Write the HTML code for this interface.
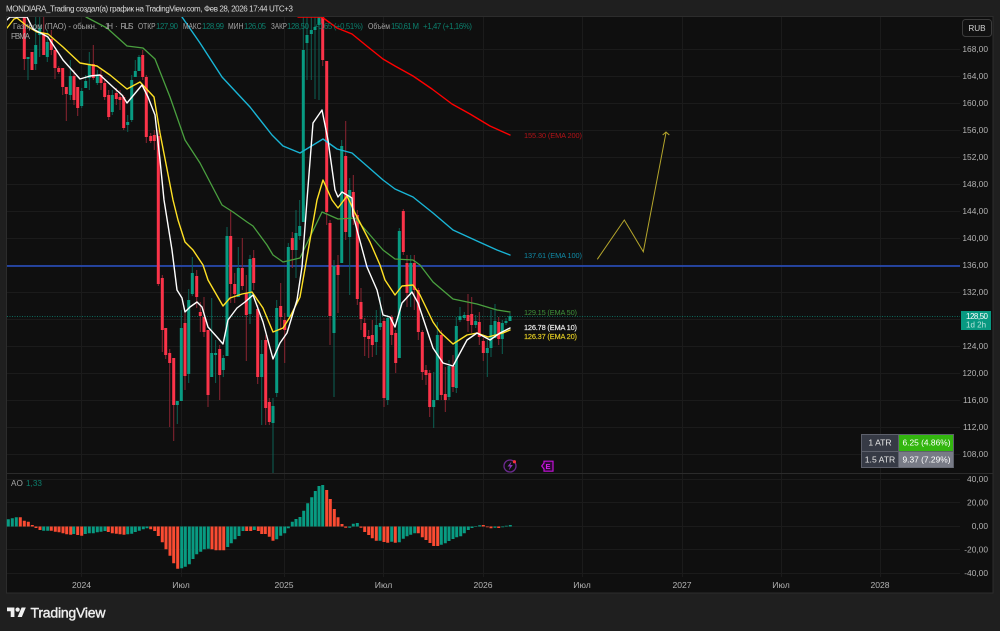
<!DOCTYPE html>
<html lang="ru"><head><meta charset="utf-8"><title>MONDIARA_Trading</title>
<style>
html,body{margin:0;padding:0;background:#1f1f1f;width:1000px;height:631px;overflow:hidden}
svg{display:block;filter:blur(.38px)}
text{font-family:"Liberation Sans","Noto Sans CJK SC",sans-serif;font-size:8px}
.p{fill:#b4b4b4;text-anchor:end;font-size:8.4px}
.t{fill:#b4b4b4;text-anchor:middle;font-size:8.6px}
.l{fill:#a6a6a6;font-size:7.8px}
.v{fill:#0c7f6d;font-size:7.8px}
.m{font-size:7.4px}
</style></head><body>
<svg width="1000" height="631" viewBox="0 0 1000 631" xmlns="http://www.w3.org/2000/svg">
<defs><clipPath id="c"><rect x="7" y="17" width="953" height="456"/></clipPath></defs>
<rect width="1000" height="631" fill="#1f1f1f"/>
<rect x="6.5" y="16.5" width="986.5" height="576.5" fill="#0f0f0f" stroke="#2c2c2c"/>
<path d="M7 49.5H960M7 76.5H960M7 103.5H960M7 130.5H960M7 157.5H960M7 184.5H960M7 211.5H960M7 238.5H960M7 265.5H960M7 292.5H960M7 319.5H960M7 346.5H960M7 373.5H960M7 400.5H960M7 427.5H960M7 454.5H960M7 479.5H960M7 502.5H960M7 526.5H960M7 549.5H960M7 573.5H960M81.5 17V577M181.5 17V577M284.5 17V577M383.5 17V577M483.5 17V577M582.5 17V577M682.5 17V577M781.5 17V577M880.5 17V577" stroke="#1b1b1b" fill="none"/>
<path d="M7 473.5H993" stroke="#2b2b2b"/>

<g clip-path="url(#c)">
<path d="M7 316.5H960" stroke="#0d6b5c" stroke-dasharray="1 1.5"/>
<path d="M7 266H960" stroke="#2a52c9" stroke-width="1.6"/>
<!-- wicks -->
<path fill="none" stroke="#0b6154" d="M28 57V80M35.7 17V70M39.7 17V57M47.3 30V62M70.3 60V100M81.7 88V108M85.7 75V88M89.3 52V90M97.3 70V85M112.3 90V115M127.7 115V132M131.7 75V122M135.3 60V77M139 55V71M177.3 401V424M181.3 310V401M188.7 289V383M192.3 257V296M211.7 298V377M215.6 340V383M223.3 355V377M227 227V356M238.3 247V297M250 255V324M261.7 340V425M273 398V473M276.7 300V397M288.3 243V317M296 210V278M299.7 200V240M303.3 17V222M307 17V80M311.3 17V80M315 17V99M319 17V100M334 260V397M341.7 140V263M349.7 178V295M376.3 310V355M380.3 297V330M387.7 315V405M399.3 228V358M410.7 255V307M433.7 372V428M437.3 322V400M449 360V400M456.3 317V393M460 307V322M464.3 312V320M475.7 315V328M487.3 340V377M491 310V357M495 304V338M502.3 320V354M506 318V325M510 313V321"/>
<path fill="none" stroke="#8a2431" d="M24.3 17V70M32 52V70M43.7 17V55M51.3 30V55M55 50V79M58.7 66V74M62.7 68V95M66.3 87V121M74 70V105M77.7 87V116M93.3 45V80M101 70V90M104.7 80V100M108.7 90V120M116.3 88V105M120 90V110M123.7 95V130M142.7 50V80M146.3 75V143M150.7 133V143M154.3 130V150M158.3 130V286M162.3 275V352M165.7 328V359M169.7 349V427M173.7 358V441M185 313V390M196.7 270V308M200.3 302V332M204 297V337M208 330V407M219.7 345V400M230.7 210V303M234.7 273V303M242.3 238V290M246.3 275V361M253.7 250V290M257.7 305V384M265.7 335V425M269.3 398V425M280.7 283V330M284.7 313V363M292.3 232V268M322.7 17V66M326.7 61V225M330 220V345M338 255V313M345.7 121V240M353.3 175V225M357.3 210V305M361 288V330M364.7 318V356M368.7 330V358M372.3 320V357M384 318V407M391.7 315V345M395.7 330V373M403.3 209V255M407 255V307M414.3 255V310M418.3 288V340M422.3 330V380M426 365V385M429.7 370V417M441.3 330V400M445.3 367V412M453 355V392M468 294V332M471.7 297V333M479.3 312V345M483.3 338V361M498.7 317V345"/>
<!-- bodies -->
<path fill="none" stroke="#089b82" stroke-width="3" d="M28 57V59M35.7 45V64M39.7 28V35M47.3 42V57M70.3 76V95M81.7 91V106M85.7 81V88M89.3 64V78M97.3 75V83M112.3 95V112M127.7 122V125M131.7 80V120M135.3 71V77M139 57V71M177.3 401V405M181.3 328V401M188.7 300V374M192.3 273V294M211.7 353V377M215.6 353V355M223.3 358V370M227 236V356M238.3 268V297M250 259V314M261.7 354V377M273 406V423M276.7 308V393M288.3 247V317M296 233V250M299.7 226V236M303.3 50V222M307 35V43M311.3 30V34M315 27V30M319 17V25M334 266V333M341.7 146V263M349.7 190V237M376.3 325V342M380.3 323V327M387.7 318V400M399.3 231V358M410.7 263V293M433.7 400V407M437.3 335V400M449 366V397M456.3 326V388M460 316V320M464.3 315V318M475.7 321V325M487.3 348V353M491 325V348M495 321V338M502.3 323V339M506 321V323M510 316V321"/>
<path fill="none" stroke="#fb3349" stroke-width="3" d="M24.3 17V59M32 52V70M43.7 33V55M51.3 39V50M55 50V68M58.7 68V72M62.7 68V87M66.3 87V94M74 76V100M77.7 87V108M93.3 64V78M101 75V83M104.7 83V97M108.7 95V117M116.3 93V99M120 97V100M123.7 97V128M142.7 55V77M146.3 77V137M150.7 136V141M154.3 135V141M158.3 136V284M162.3 278V330M165.7 328V355M169.7 353V363M173.7 358V405M185 323V376M196.7 276V297M200.3 312V316M204 317V332M208 330V395M219.7 349V375M230.7 236V284M234.7 284V294M242.3 268V286M246.3 293V315M253.7 258V283M257.7 309V377M265.7 340V408M269.3 402V422M280.7 306V317M284.7 320V330M292.3 238V250M322.7 17V60M326.7 61V212M330 223V316M338 265V275M345.7 156V232M353.3 192V217M357.3 215V299M361 302V319M364.7 323V337M368.7 336V339M372.3 335V345M384 321V398M391.7 317V335M395.7 333V363M403.3 211V252M407 263V293M414.3 263V290M418.3 290V332M422.3 332V372M426 370V375M429.7 373V407M441.3 335V395M445.3 394V400M453 366V387M468 315V321M471.7 314V325M479.3 322V337M483.3 341V353M498.7 322V339"/>
<!-- EMA lines -->
<g fill="none" stroke-linejoin="round" stroke-linecap="round">
<path stroke="#4aa03f" stroke-width="1.3" d="M86 17L107 28L127 46L143 48L155 59L170 97L185 140L200 163L222 205L233 212L247 222L253 226L267 245L273 255L283 262L300 258L310 237L322 212L338 219L355 218L370 235L383 250L395 259L413 260L420 265L433 282L453 299L477 304L497 310L510 312"/>
<path stroke="#19b5d6" stroke-width="1.4" d="M182 17L200 43L222 77L250 107L272 135L283 146L300 153L323 139L337 149L352 153L367 166L383 180L395 189L413 197L433 213L453 230L477 241L497 250L510 255"/>
<path stroke="#f00" stroke-width="1.4" d="M298 17H322L337 28L352 34L368 47L383 59L395 66L413 76L432 89L452 104L470 114L490 126L510 135"/>
<path stroke="#ffe125" stroke-width="1.4" d="M7 28L14 19L17 18L27 26L37 32L48 34L63 47L80 63L97 66L110 75L127 89L140 82L154 97L160 133L173 200L178 220L185 242L193 250L203 265L208 280L223 306L230 298L242 294L252 292L263 308L273 332L283 328L290 317L300 297L310 240L317 200L323 180L332 200L338 208L347 196L355 213L370 242L380 265L385 280L395 295L402 286L413 285L420 295L433 322L440 332L453 344L467 335L477 333L488 337L503 333L510 330"/>
<path stroke="#fff" stroke-width="1.4" d="M7 20L10 17H27L33 29L48 37L63 60L80 79L90 76L100 75L113 87L122 95L127 103L142 85L148 97L155 115L160 160L164 200L172 250L177 290L182 298L185 312L190 307L197 302L202 307L208 327L217 337L223 344L228 320L237 308L245 302L253 295L263 322L273 359L280 343L287 333L297 300L302 267L307 200L313 123L322 110L328 140L335 190L338 197L342 192L352 198L353 215L367 267L377 290L383 315L390 317L395 327L402 303L412 292L418 303L433 348L443 363L453 366L467 340L477 333L490 340L500 333L510 328"/>
</g>
<!-- projection arrow -->
<path fill="none" stroke="#b5a62c" d="M597.3 259.3L624.3 220L643.3 251.7L666 132.7M662.7 135L666 132L669.3 135"/>
<!-- icons -->
<circle cx="510" cy="466" r="6" fill="none" stroke="#6b2a8f" stroke-width="1.3"/>
<path d="M511.5 461.5L507.5 466.5H510L508.7 470.5L512.8 465H510.3Z" fill="#8a36b8"/>
<circle cx="514.4" cy="461.7" r="1.6" fill="#f5303f"/>
<path d="M541.7 466L544 463V461.2H553V471.2H544V469Z" fill="#2c0a33" stroke="#c211d6" stroke-width="1.2"/>
<text x="545.5" y="469" fill="#d31fe6" style="font-size:7.5px;font-weight:700">E</text>
</g>

<!-- AO -->
<path fill="none" stroke="#089b82" stroke-width="3" d="M8.3 526.5V519.3M12.3 526.5V518.3M16.3 526.5V517.3M43.7 526.5V530.7M47.7 526.5V530.7M73.7 526.5V534M85.3 526.5V534M89.3 526.5V533.3M93.3 526.5V533.3M97.3 526.5V532.3M101 526.5V531.7M105 526.5V531M127.7 526.5V534.3M131.7 526.5V533.7M135.3 526.5V532M139.3 526.5V530.7M143.3 526.5V529.3M147 526.5V528.3M181.7 526.5V568.3M185.3 526.5V566.7M189.3 526.5V564.3M193 526.5V559M196.7 526.5V554.3M200.7 526.5V551.7M204.3 526.5V549.3M208.3 526.5V548.7M227.7 526.5V547M231.3 526.5V543.3M235 526.5V539.3M239 526.5V536M243 526.5V531M254.3 526.5V530M276.7 526.5V539.3M280.7 526.5V535.7M284.7 526.5V533.3M288.3 526.5V528.3M292.3 526.5V521.7M296 526.5V519M300 526.5V517M303.7 526.5V510.7M307.7 526.5V503.3M311.7 526.5V497.3M315.3 526.5V491M319 526.5V486M322.7 526.5V485M349.7 526.5V527.7M353.3 526.5V523.7M357.3 526.5V523M380 526.5V540.7M391.7 526.5V541.7M399.3 526.5V542.3M403.3 526.5V538.7M407 526.5V536.3M410.7 526.5V534.7M414.7 526.5V533.3M441.3 526.5V544.7M445.3 526.5V543.3M449 526.5V541M453 526.5V539M456.7 526.5V537.3M460.7 526.5V536.3M464.3 526.5V533.3M468.3 526.5V530M472 526.5V528M475.7 526.5V526M479.7 526.5V525.3M495 526.5V527.7M502.7 526.5V527.3M506.3 526.5V525.7M510.3 526.5V525"/>
<path fill="none" stroke="#fb4b32" stroke-width="3" d="M20.3 526.5V517.3M24.3 526.5V520.7M28.3 526.5V521.7M32.3 526.5V525M36 526.5V528M40 526.5V530M51.3 526.5V530.7M55.3 526.5V531.7M59 526.5V532.3M63 526.5V533.3M66.7 526.5V534.3M70.7 526.5V534.7M77.7 526.5V535M81.7 526.5V535.7M108.3 526.5V532M112.3 526.5V533.3M116.3 526.5V533.7M120 526.5V534.3M124 526.5V534.7M150.7 526.5V529.3M154.7 526.5V531M158.3 526.5V536M162.3 526.5V542.3M166 526.5V549.3M170 526.5V555.7M173.7 526.5V563.3M177.7 526.5V568.7M212 526.5V549.3M216 526.5V550.3M220 526.5V550.3M223.7 526.5V550.3M246.7 526.5V531M250.7 526.5V531M258.3 526.5V531M261.7 526.5V534M265.3 526.5V534M269.3 526.5V536.7M273 526.5V540.7M326.7 526.5V490M330.3 526.5V499M334.3 526.5V509M338 526.5V517.3M342 526.5V524M345.7 526.5V527.7M361 526.5V527.7M364.7 526.5V532M368.7 526.5V535M372.3 526.5V538.3M376.3 526.5V540.7M384 526.5V542M387.7 526.5V542.7M395.3 526.5V542.7M418.3 526.5V533.3M422.3 526.5V537.3M426 526.5V540M430 526.5V543M433.7 526.5V546M437.7 526.5V546M483.3 526.5V525M487.3 526.5V527.3M491 526.5V528.3M498.7 526.5V528"/>

<!-- header -->
<text x="6" y="11.5" fill="#dcdcdc" textLength="287" lengthAdjust="spacing" style="font-size:8px">MONDIARA_Trading создал(а) график на TradingView.com, Фев 28, 2026 17:44 UTC+3</text>

<!-- legend -->
<text class="l" x="13" y="29" textLength="84">Газпром (ПАО) - обыкн.</text>
<text class="l" x="100" y="29">·</text><text class="l" x="105" y="29" textLength="8">1Н</text><text class="l" x="115" y="29">·</text><text class="l" x="120.5" y="29" textLength="13">RUS</text>
<text class="l" x="138" y="29" textLength="17.5" lengthAdjust="spacingAndGlyphs">ОТКР</text><text class="v" x="156" y="29" textLength="22">127,90</text>
<text class="l" x="183" y="29" textLength="18.5" lengthAdjust="spacingAndGlyphs">МАКС</text><text class="v" x="202" y="29" textLength="22">128,99</text>
<text class="l" x="228" y="29" textLength="15.5" lengthAdjust="spacingAndGlyphs">МИН</text><text class="v" x="244" y="29" textLength="22">126,05</text>
<text class="l" x="271" y="29" textLength="16" lengthAdjust="spacingAndGlyphs">ЗАКР</text><text class="v" x="287" y="29" textLength="22">128,50</text>
<text class="v" x="314" y="29" textLength="49">+0,65 (+0,51%)</text>
<text class="l" x="368" y="29" textLength="22" lengthAdjust="spacingAndGlyphs">Объём</text><text class="v" x="391" y="29" textLength="28">150,61 M</text>
<text class="v" x="423" y="29" textLength="49">+1,47 (+1,16%)</text>
<text class="l" x="11" y="39" textLength="19">FBMA</text>

<!-- EMA labels -->
<text class="m" x="524" y="138" fill="#b31217" textLength="58" lengthAdjust="spacing">155.30 (EMA 200)</text>
<text class="m" x="524" y="258" fill="#108aa6" textLength="58" lengthAdjust="spacing">137.61 (EMA 100)</text>
<text class="m" x="524" y="315" fill="#3f8f38" textLength="53" lengthAdjust="spacing">129.15 (EMA 50)</text>
<text class="m" x="524" y="330" fill="#f0f0f0" textLength="53" lengthAdjust="spacing" stroke="#f0f0f0" stroke-width=".15">126.78 (EMA 10)</text>
<text class="m" x="524" y="339" fill="#e6cf24" textLength="53" lengthAdjust="spacing" stroke="#e6cf24" stroke-width=".15">126.37 (EMA 20)</text>

<!-- price scale -->
<rect x="962.5" y="19.5" width="29" height="17" rx="3" fill="#111" stroke="#3c3c3c"/>
<text x="977" y="31" fill="#d0d0d0" text-anchor="middle" style="font-size:8.2px">RUB</text>
<text class="p" x="988" y="52">168,00</text><text class="p" x="988" y="79">164,00</text><text class="p" x="988" y="106">160,00</text><text class="p" x="988" y="133">156,00</text><text class="p" x="988" y="160">152,00</text><text class="p" x="988" y="187">148,00</text><text class="p" x="988" y="214">144,00</text><text class="p" x="988" y="241">140,00</text><text class="p" x="988" y="268">136,00</text><text class="p" x="988" y="295">132,00</text>
<text class="p" x="988" y="349">124,00</text><text class="p" x="988" y="376">120,00</text><text class="p" x="988" y="403">116,00</text><text class="p" x="988" y="430">112,00</text><text class="p" x="988" y="457">108,00</text>
<text class="p" x="988" y="482">40,00</text><text class="p" x="988" y="505.5">20,00</text><text class="p" x="988" y="529">0,00</text><text class="p" x="988" y="552.5">-20,00</text><text class="p" x="988" y="576">-40,00</text>
<rect x="961" y="311" width="30" height="19" fill="#089981"/>
<text x="966" y="319" fill="#fff" textLength="22" style="font-size:8px">128,50</text>
<text x="966" y="327.5" fill="#b8e4db" style="font-size:8px">1d 2h</text>

<!-- ATR table -->
<rect x="861.5" y="434.5" width="92" height="33" fill="#363a45" stroke="#5d606b"/>
<rect x="899" y="435" width="54" height="16" fill="#33b60f"/>
<rect x="899" y="451.5" width="54" height="16" fill="#787b86"/>
<path d="M861.5 451.5H953.5M898.5 434.5V467.5" stroke="#5d606b"/>
<text x="880" y="445.5" fill="#e8e8e8" text-anchor="middle" style="font-size:8.6px">1 ATR</text>
<text x="880" y="462.5" fill="#e8e8e8" text-anchor="middle" style="font-size:8.6px">1.5 ATR</text>
<text x="902.5" y="445.5" fill="#fff" textLength="48" style="font-size:8.4px">6.25 (4.86%)</text>
<text x="902.5" y="462.5" fill="#fff" textLength="48" style="font-size:8.4px">9.37 (7.29%)</text>

<!-- AO legend -->
<text class="l" x="11" y="486" style="font-size:8.2px">AO</text><text x="26" y="486" fill="#0c7f6d" style="font-size:8.2px">1,33</text>

<!-- time axis -->
<text class="t" x="81.5" y="588">2024</text><text class="t" x="181" y="588">Июл</text><text class="t" x="284" y="588">2025</text><text class="t" x="383.5" y="588">Июл</text><text class="t" x="483" y="588">2026</text><text class="t" x="582" y="588">Июл</text><text class="t" x="682" y="588">2027</text><text class="t" x="781" y="588">Июл</text><text class="t" x="880" y="588">2028</text>

<!-- logo -->
<g transform="translate(7 605.4) scale(.53)" fill="#f0f0f0"><path d="M14 22H7V11H0V4h14v18zM28 22h-8l7.5-18h8L28 22z"/><circle cx="20" cy="8" r="4"/></g>
<text x="30.5" y="617.5" fill="#eee" stroke="#eee" stroke-width=".4" textLength="75" lengthAdjust="spacing" style="font-size:14px">TradingView</text>
</svg>
</body></html>
